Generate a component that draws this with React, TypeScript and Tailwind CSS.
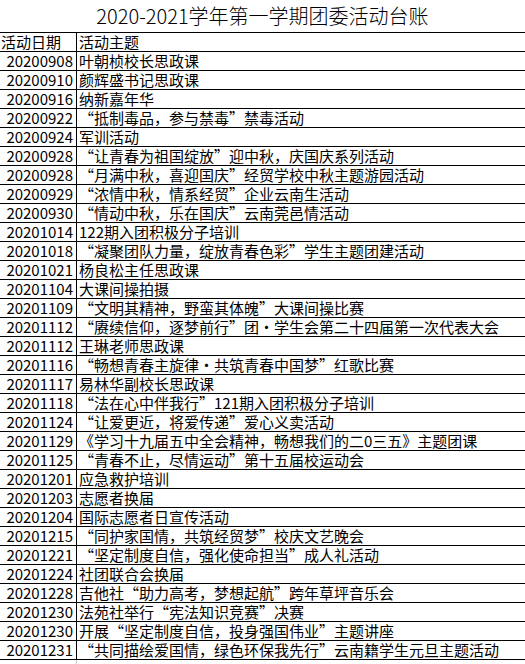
const rows: [string, string][] = [
  ["20200908", "叶朝桢校长思政课"],
  ["20200910", "颜辉盛书记思政课"],
  ["20200916", "纳新嘉年华"],
  ["20200922", "“抵制毒品，参与禁毒”禁毒活动"],
  ["20200924", "军训活动"],
  ["20200928", "“让青春为祖国绽放”迎中秋，庆国庆系列活动"],
  ["20200928", "“月满中秋，喜迎国庆”经贸学校中秋主题游园活动"],
  ["20200929", "“浓情中秋，情系经贸”企业云南生活动"],
  ["20200930", "“情动中秋，乐在国庆”云南莞邑情活动"],
  ["20201014", "122期入团积极分子培训"],
  ["20201018", "“凝聚团队力量，绽放青春色彩”学生主题团建活动"],
  ["20201021", "杨良松主任思政课"],
  ["20201104", "大课间操拍摄"],
  ["20201109", "“文明其精神，野蛮其体魄”大课间操比赛"],
  ["20201112", "“赓续信仰，逐梦前行”团·学生会第二十四届第一次代表大会"],
  ["20201112", "王琳老师思政课"],
  ["20201116", "“畅想青春主旋律·共筑青春中国梦”红歌比赛"],
  ["20201117", "易林华副校长思政课"],
  ["20201118", "“法在心中伴我行”121期入团积极分子培训"],
  ["20201124", "“让爱更近，将爱传递”爱心义卖活动"],
  ["20201129", "《学习十九届五中全会精神，畅想我们的二0三五》主题团课"],
  ["20201125", "“青春不止，尽情运动”第十五届校运动会"],
  ["20201201", "应急救护培训"],
  ["20201203", "志愿者换届"],
  ["20201204", "国际志愿者日宣传活动"],
  ["20201215", "“同护家国情，共筑经贸梦”校庆文艺晚会"],
  ["20201221", "“坚定制度自信，强化使命担当”成人礼活动"],
  ["20201224", "社团联合会换届"],
  ["20201228", "吉他社“助力高考，梦想起航”跨年草坪音乐会"],
  ["20201230", "法苑社举行“宪法知识竞赛”决赛"],
  ["20201230", "开展“坚定制度自信，投身强国伟业”主题讲座"],
  ["20201231", "“共同描绘爱国情，绿色环保我先行”云南籍学生元旦主题活动"],
];

const App = () => {
  return (
    <div className="w-[525px] h-[664px] overflow-hidden bg-white text-black font-['Noto_Sans_CJK_SC',sans-serif]">
      <div className="h-[32px] flex items-center justify-center text-[20px] font-light leading-[32px] whitespace-nowrap">
        2020-2021学年第一学期团委活动台账
      </div>
      <div className="border-b border-black">
        <div className="grid grid-cols-[77px_1fr] h-[19px] border-t border-black text-[15px] leading-[18px]">
          <div className="border-r border-black pl-[1px] whitespace-nowrap">活动日期</div>
          <div className="pl-[2px] whitespace-nowrap">活动主题</div>
        </div>
        {rows.map(([date, title], i) => (
          <div
            key={i}
            className="grid grid-cols-[77px_1fr] h-[19px] border-t border-black text-[15px] leading-[18px]"
          >
            <div className="border-r border-black pr-[3px] text-right whitespace-nowrap">{date}</div>
            <div className="pl-[2px] whitespace-nowrap">{title}</div>
          </div>
        ))}
      </div>
      <div className="grid grid-cols-[77px_1fr] h-[10px]">
        <div className="border-r border-[#d4d4d4]" />
        <div />
      </div>
    </div>
  );
};

export default App;
